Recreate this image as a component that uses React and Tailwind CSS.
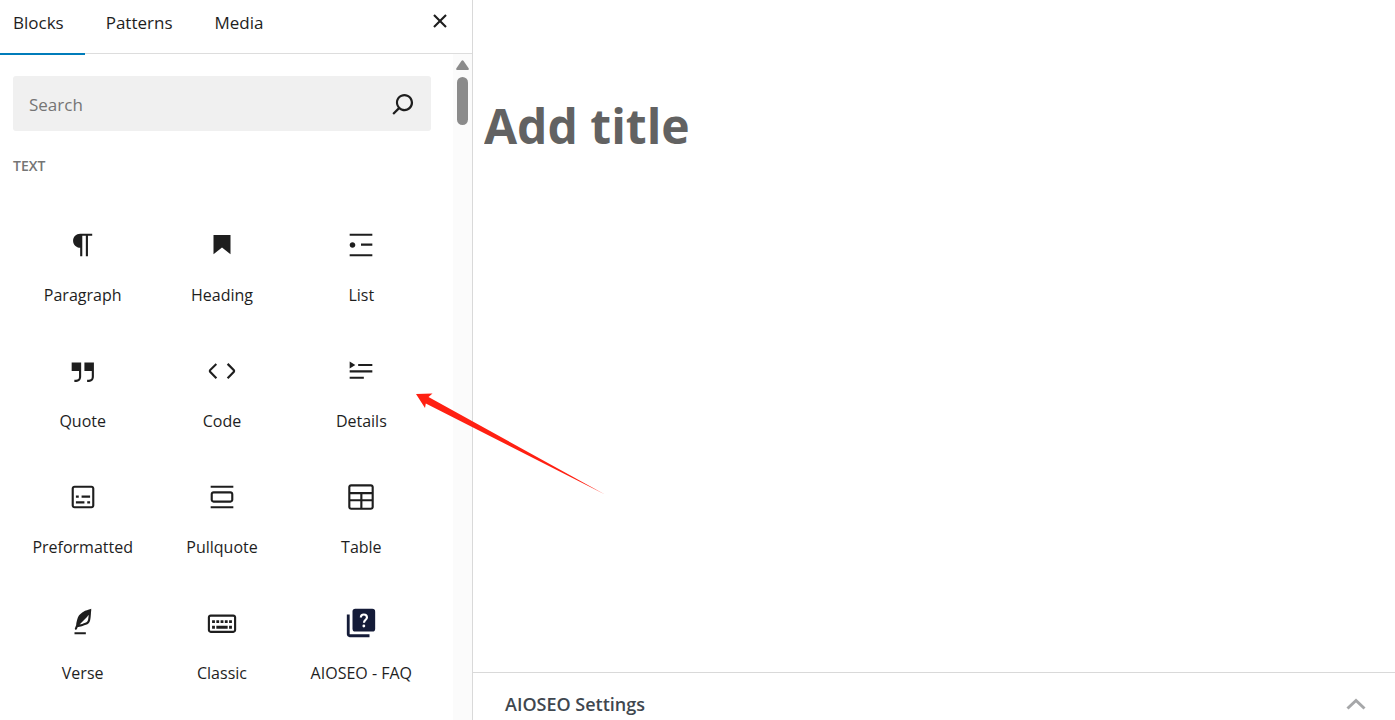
import React, { useState } from 'react';

const tabs = ['Blocks', 'Patterns', 'Media'];

const blocks = [
  {
    name: 'Paragraph',
    path: 'm9.99609 14v-.2251l.00391.0001v6.225h1.5v-14.5h2.5v14.5h1.5v-14.5h3v-1.5h-8.50391c-2.76142 0-5 2.23858-5 5 0 2.7614 2.23858 5 5 5z',
  },
  { name: 'Heading', path: 'M6 5V18.5911L12 13.8473L18 18.5911V5H6Z' },
  {
    name: 'List',
    path: 'M4 4v1.5h16V4H4zm8 8.5h8V11h-8v1.5zM4 20h16v-1.5H4V20zm4-8c0-1.1-.9-2-2-2s-2 .9-2 2 .9 2 2 2 2-.9 2-2z',
  },
  {
    name: 'Quote',
    path: 'M13 6v6h5.2v4c0 .8-.2 1.4-.5 1.7-.6.6-1.6.6-2.5.5h-.3v1.5h.5c1 0 2.3-.1 3.3-1 .6-.6 1-1.6 1-2.8V6H13zm-9 6h5.2v4c0 .8-.2 1.4-.5 1.7-.6.6-1.6.6-2.5.5h-.3v1.5h.5c1 0 2.3-.1 3.3-1 .6-.6 1-1.6 1-2.8V6H4v6z',
  },
  {
    name: 'Code',
    path: 'M20.8 10.7l-4.3-4.3-1.1 1.1 4.3 4.3c.1.1.1.3 0 .4l-4.3 4.3 1.1 1.1 4.3-4.3c.7-.8.7-1.9 0-2.6zM4.2 11.8l4.3-4.3-1-1-4.3 4.3c-.7.7-.7 1.8 0 2.5l4.3 4.3 1.1-1.1-4.3-4.3c-.2-.1-.2-.3-.1-.4z',
  },
  {
    name: 'Details',
    path: 'M4 16h10v1.5H4V16Zm0-4.5h16V13H4v-1.5ZM10 7h10v1.5H10V7Zm-6-1.75 4 2.5-4 2.5v-5Z',
  },
  {
    name: 'Preformatted',
    path: 'M18 4H6c-1.1 0-2 .9-2 2v12c0 1.1.9 2 2 2h12c1.1 0 2-.9 2-2V6c0-1.1-.9-2-2-2zm.5 14c0 .3-.2.5-.5.5H6c-.3 0-.5-.2-.5-.5V6c0-.3.2-.5.5-.5h12c.3 0 .5.2.5.5v12zM7 16.5h6V15H7v1.5zm4-4h6V11h-6v1.5zM9 11H7v1.5h2V11zm6 5.5h2V15h-2v1.5z',
  },
  {
    name: 'Pullquote',
    path: 'M18 8H6c-1.1 0-2 .9-2 2v4c0 1.1.9 2 2 2h12c1.1 0 2-.9 2-2v-4c0-1.1-.9-2-2-2zm.5 6c0 .3-.2.5-.5.5H6c-.3 0-.5-.2-.5-.5v-4c0-.3.2-.5.5-.5h12c.3 0 .5.2.5.5v4zM4 4v1.5h16V4H4zm0 16h16v-1.5H4V20z',
  },
  {
    name: 'Table',
    path: 'M19 3H5c-1.1 0-2 .9-2 2v14c0 1.1.9 2 2 2h14c1.1 0 2-.9 2-2V5c0-1.1-.9-2-2-2zM5 4.5h14c.3 0 .5.2.5.5v3.5h-15V5c0-.3.2-.5.5-.5zm8 5.5h6.5v3.5H13V10zm-1.5 3.5h-7V10h7v3.5zm-7 5.5v-4h7v4.5H5c-.3 0-.5-.2-.5-.5zm14.5.5h-6V15h6.5v4c0 .3-.2.5-.5.5z',
  },
  {
    name: 'Verse',
    path: 'M17.8 2l-.9.3c-.1 0-3.6 1-5.2 2.1C10 5.5 9.3 6.5 8.9 7.1c-.6.9-1.7 4.7-1.7 6.3l-.9 2.3c-.2.4 0 .8.4 1 .1 0 .2.1.3.1.3 0 .6-.2.7-.5l.6-1.5c.3 0 .7-.1 1.2-.2.7-.1 1.4-.3 2.2-.5.8-.2 1.6-.5 2.4-.8.7-.3 1.4-.7 1.9-1.2s.8-1.2 1-1.9c.2-.7.3-1.6.4-2.4.1-.8.1-1.7.2-2.5 0-.8.1-1.5.2-2.1V2zm-1.9 5.6c-.1.8-.2 1.5-.3 2.1-.2.6-.4 1-.6 1.3-.3.3-.8.6-1.4.9-.7.3-1.4.5-2.2.8-.6.2-1.3.3-1.8.4L15 7.5c.3-.3.6-.7 1-1.1 0 .4 0 .8-.1 1.2zM6 20h8v-1.5H6V20z',
  },
  {
    name: 'Classic',
    path: 'M20 6H4c-1.1 0-2 .9-2 2v9c0 1.1.9 2 2 2h16c1.1 0 2-.9 2-2V8c0-1.1-.9-2-2-2zm.5 11c0 .3-.2.5-.5.5H4c-.3 0-.5-.2-.5-.5V8c0-.3.2-.5.5-.5h16c.3 0 .5.2.5.5v9zM10 10H8v2h2v-2zm-5 2h2v-2H5v2zm8-2h-2v2h2v-2zm-5 6h8v-2H8v2zm6-4h2v-2h-2v2zm3 0h2v-2h-2v2zm0 4h2v-2h-2v2zM5 16h2v-2H5v2z',
  },
  { name: 'AIOSEO - FAQ', faq: true },
];

const Icon = ({ path }) => (
  <svg className="size-[34px] shrink-0" viewBox="0 0 24 24" fill="currentColor" aria-hidden="true">
    <path d={path} />
  </svg>
);

const FaqIcon = () => (
  <svg className="size-[34px] shrink-0 text-[#141b38]" viewBox="0 0 24 24" fill="currentColor" aria-hidden="true">
    <path d="M4 6H2v14c0 1.1.9 2 2 2h14v-2H4V6z" />
    <rect x="6" y="2" width="16" height="16" rx="2" />
    <path d="M11.9 8.2c0-1.3.9-2.2 2.1-2.2s2.2.9 2.2 2.1c0 1.6-2.1 1.8-2.1 3.8" fill="none" stroke="white" strokeWidth="1.5" />
    <circle cx="14" cy="14.1" r="1" fill="white" />
  </svg>
);

const BlockItem = ({ block }) => (
  <button type="button" className="flex h-[126px] flex-col items-center gap-[21px] pt-[37px] text-[#1e1e1e]">
    {block.faq ? <FaqIcon /> : <Icon path={block.path} />}
    <span className="text-base leading-6 whitespace-nowrap">{block.name}</span>
  </button>
);

const Scrollbar = () => (
  <div className="flex w-[19px] shrink-0 flex-col items-center gap-[7px] bg-[#fbfbfb] pt-[6px]" aria-hidden="true">
    <svg className="h-[10px] w-[13px]" viewBox="0 0 13 10" fill="#8b8b8b">
      <path d="M5.400.9a1.400 1.400 0 0 1 2.200 0l5 7.300c.5.8.1 1.800-.9 1.800H1.300C.3 10-.1 9 .4 8.200z" />
    </svg>
    <div className="h-12 w-[11px] rounded-full bg-[#8b8b8b]" />
  </div>
);

const Inserter = () => {
  const [active, setActive] = useState('Blocks');

  return (
    <aside className="flex w-[473px] shrink-0 flex-col border-r border-[#d9d9d9]">
      <div className="flex h-[54px] shrink-0 border-b border-[#dddddd]">
        {tabs.map((tab) => (
          <button
            key={tab}
            type="button"
            onClick={() => setActive(tab)}
            className={`-mb-[2px] flex items-start border-b-2 px-[21px] pt-[11px] text-[17px] leading-6 text-[#1e1e1e] first:pl-[13px] ${
              active === tab ? 'border-[#007cba]' : 'border-transparent'
            }`}
          >
            {tab}
          </button>
        ))}
        <button type="button" aria-label="Close" className="mr-[15px] ml-auto self-start pt-1 text-[#1e1e1e]">
          <Icon path="M12 13.06l3.712 3.713 1.061-1.06L13.061 12l3.712-3.712-1.06-1.06L12 10.938 8.288 7.227l-1.061 1.06L10.939 12l-3.712 3.712 1.06 1.061L12 13.061z" />
        </button>
      </div>

      <div className="flex min-h-0 flex-1">
        <div className="min-w-0 flex-1 overflow-hidden pt-[22px] pr-[22px] pl-[13px]">
          <div className="flex h-[55px] items-center rounded-[3px] bg-[#f0f0f0] pr-[11px] pl-4 text-[#1e1e1e]">
            <input
              type="text"
              aria-label="Search"
              placeholder="Search"
              className="h-full min-w-0 flex-1 bg-transparent pt-[2px] text-[17px] leading-6 outline-none placeholder:text-[#757575]"
            />
            <Icon path="M13 5c-3.3 0-6 2.7-6 6 0 1.4.5 2.7 1.3 3.7l-3.8 3.8 1.1 1.1 3.8-3.8c1 .8 2.3 1.3 3.7 1.3 3.3 0 6-2.7 6-6S16.3 5 13 5zm0 10.5c-2.5 0-4.5-2-4.5-4.5s2-4.5 4.5-4.5 4.5 2 4.5 4.5-2 4.5-4.5 4.5z" />
          </div>
          <h2 className="mt-[25px] text-sm leading-5 font-semibold text-[#757575] uppercase">Text</h2>
          <div className="mt-[15px] grid grid-cols-3">
            {blocks.map((block) => (
              <BlockItem key={block.name} block={block} />
            ))}
          </div>
        </div>
        <Scrollbar />
      </div>
    </aside>
  );
};

const Editor = () => (
  <main className="flex min-w-0 flex-1 flex-col">
    <div className="flex-1 px-[11px] pt-[93px]">
      <input
        type="text"
        aria-label="Add title"
        placeholder="Add title"
        className="h-16 w-full bg-transparent text-5xl font-bold outline-none placeholder:text-[#626262]"
      />
    </div>
    <div className="h-12 shrink-0 overflow-hidden border-t border-[#d9d9d9]">
      <button type="button" className="flex h-[62px] w-full items-center justify-between pr-[29px] pl-8">
        <span className="text-lg font-semibold text-[#3f474f]">AIOSEO Settings</span>
        <svg className="h-3 w-5" viewBox="0 0 20 12" fill="none" stroke="#a6a7a9" strokeWidth="3" aria-hidden="true">
          <path d="M1.500 10.500 10 2.500l8.500 8" />
        </svg>
      </button>
    </div>
  </main>
);

// red pointer drawn over the panel edge, towards the Details block
const Arrow = () => (
  <svg className="pointer-events-none absolute top-[393px] left-[416px] h-[102px] w-[190px]" viewBox="0 0 190 102" aria-hidden="true">
    <path d="M0 1 16.500.500 12.500 4 189 101.500 9.800 10.500 9 15z" fill="#ff2012" />
  </svg>
);

const App = () => (
  <div className="relative flex h-screen overflow-hidden bg-white font-['Open_Sans','Noto_Sans',sans-serif]">
    <Inserter />
    <Editor />
    <Arrow />
  </div>
);

export default App;
